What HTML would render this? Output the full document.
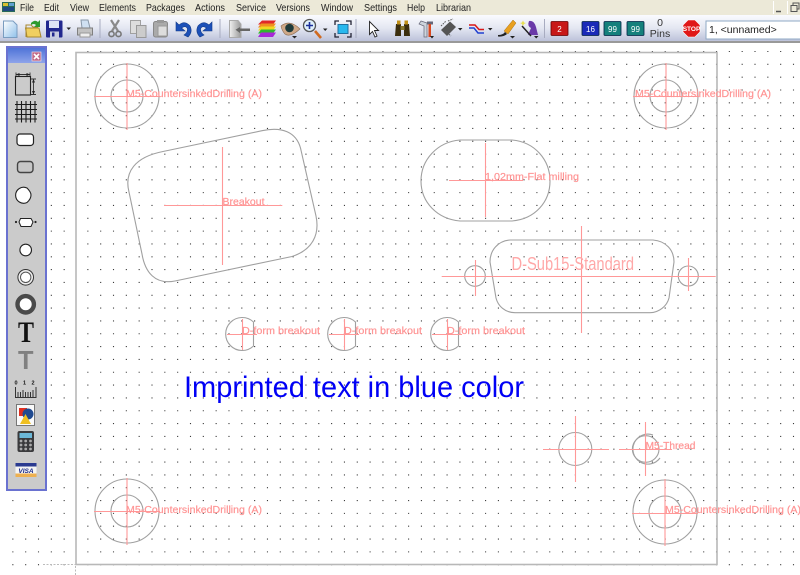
<!DOCTYPE html>
<html><head><meta charset="utf-8"><style>
html,body{margin:0;padding:0;background:#fff}
body{width:800px;height:575px;overflow:hidden;position:relative;font-family:"Liberation Sans",sans-serif}
svg{position:absolute;left:0;top:0;display:block}
</style></head><body>
<svg width="800" height="575" viewBox="0 0 800 575" xmlns="http://www.w3.org/2000/svg" font-family="'Liberation Sans',sans-serif">
<defs>
<path id="r" d="M12.3 0H75M87.3 0H800" stroke="#3a3a3a" stroke-width="1.1" stroke-dasharray="1.1 11.73" fill="none"/>
<linearGradient id="tb" x1="0" y1="0" x2="0" y2="1"><stop offset="0" stop-color="#fafbff"/><stop offset=".5" stop-color="#e4e7f2"/><stop offset="1" stop-color="#bcc2da"/></linearGradient>
<linearGradient id="tt" x1="0" y1="0" x2="0" y2="1"><stop offset="0" stop-color="#4f74d8"/><stop offset="1" stop-color="#8ea4ea"/></linearGradient>
<linearGradient id="doc" x1="0" y1="0" x2="1" y2="1"><stop offset="0" stop-color="#fff"/><stop offset="1" stop-color="#8fc0ea"/></linearGradient>
<linearGradient id="gr" x1="0" y1="0" x2="1" y2="0"><stop offset="0" stop-color="#f0f0f0"/><stop offset="1" stop-color="#999"/></linearGradient>
</defs>

<!-- canvas -->
<rect x="0" y="43" width="800" height="532" fill="#fff"/>
<use href="#r" y="51.5"/><use href="#r" y="64.33"/><use href="#r" y="77.16"/><use href="#r" y="89.99"/><use href="#r" y="102.82"/><use href="#r" y="115.65"/><use href="#r" y="128.48"/><use href="#r" y="141.31"/><use href="#r" y="154.14"/><use href="#r" y="166.97"/><use href="#r" y="179.8"/><use href="#r" y="192.63"/><use href="#r" y="205.46"/><use href="#r" y="218.29"/><use href="#r" y="231.12"/><use href="#r" y="243.95"/><use href="#r" y="256.78"/><use href="#r" y="269.61"/><use href="#r" y="282.44"/><use href="#r" y="295.27"/><use href="#r" y="308.1"/><use href="#r" y="320.93"/><use href="#r" y="333.76"/><use href="#r" y="346.59"/><use href="#r" y="359.42"/><use href="#r" y="372.25"/><use href="#r" y="385.08"/><use href="#r" y="397.91"/><use href="#r" y="410.74"/><use href="#r" y="423.57"/><use href="#r" y="436.4"/><use href="#r" y="449.23"/><use href="#r" y="462.06"/><use href="#r" y="474.89"/><use href="#r" y="487.72"/><use href="#r" y="500.55"/><use href="#r" y="513.38"/><use href="#r" y="526.21"/><use href="#r" y="539.04"/><use href="#r" y="551.87"/><use href="#r" y="564.7"/>
<rect x="76" y="52.5" width="641" height="512" fill="none" stroke="#b8b8b8" stroke-width="1.6"/>
<path d="M43 564.5H76M75.5 566V575" stroke="#bbb" stroke-width="1" stroke-dasharray="2 1.5" fill="none"/>

<!-- drawing: outlines -->
<g fill="none" stroke="#a0a0a0" stroke-width="1.1">
<circle cx="127" cy="96" r="32"/><circle cx="127" cy="96" r="16"/>
<circle cx="666" cy="96" r="32"/><circle cx="666" cy="96" r="16"/>
<circle cx="127" cy="511" r="32"/><circle cx="127" cy="511" r="16"/>
<circle cx="665" cy="512" r="32"/><circle cx="665" cy="512" r="16"/>
<path d="M163 151.5L262 130.7C282 126.5 296 132 300.5 148L316 216C320 235 312 250 292 256.5L175 281C155 285 145 272 142 254L129 192C124 172 135 157 163 151.5Z"/>
<path d="M460 140H512C535 142 550 160 550 181C550 202 535 219 512 221H460C437 219 421 202 421 181C421 160 437 142 460 140Z"/>
<path d="M510 240H653C666 241 674 250 674 262L669 298C667 306 659 312.7 650 312.7H515C505 312.7 498 306 496 298L490 262C490 250 498 241 510 240Z"/>
<circle cx="475" cy="276" r="10.3"/><circle cx="688.3" cy="276" r="10"/>
<path d="M253.5 322A16.5 16.5 0 1 0 253.5 346Z"/>
<path d="M355.5 322A16.5 16.5 0 1 0 355.5 346Z"/>
<path d="M458.5 322A16.5 16.5 0 1 0 458.5 346Z"/>
<circle cx="575.3" cy="449" r="16.5"/>
<circle cx="645.7" cy="449" r="13.3"/>
<path d="M653 435A15 15 0 1 0 660 458"/>
</g>

<!-- drawing: red crosses -->
<g fill="none" stroke="#ff9898" stroke-width="1.1">
<path d="M94 96.5H160M127 63V130"/>
<path d="M633 96.5H699M666 63V130"/>
<path d="M94 511.5H160M127 478V545"/>
<path d="M632 513.5H698M665 479V546"/>
<path d="M164 205.5H282.3M222.5 147V265"/>
<path d="M449 180.5H523M485.5 143V217"/>
<path d="M441.7 276.5H715.7M581.5 226V333M475.5 260V296M688.5 258V291"/>
<path d="M227 334.5H257M242.5 319V350"/>
<path d="M329 334.5H359M344.5 319V350"/>
<path d="M432 334.5H462M447.5 319V350"/>
<path d="M543 449.5H609M575.5 416V482"/>
<path d="M619 449.5H672M645.5 422V476"/>
</g>
<g fill="#ff9494" stroke="#ff9494" stroke-width=".2" font-size="10.5">
<text x="126" y="97" textLength="136" lengthAdjust="spacingAndGlyphs">M5-CountersinkedDrilling (A)</text>
<text x="635" y="97" textLength="136" lengthAdjust="spacingAndGlyphs">M5-CountersinkedDrilling (A)</text>
<text x="126" y="513" textLength="136" lengthAdjust="spacingAndGlyphs">M5-CountersinkedDrilling (A)</text>
<text x="665" y="513" textLength="136" lengthAdjust="spacingAndGlyphs">M5-CountersinkedDrilling (A)</text>
<text x="222.5" y="205" textLength="42" lengthAdjust="spacingAndGlyphs">Breakout</text>
<text x="485" y="180" textLength="94" lengthAdjust="spacingAndGlyphs">1,02mm-Flat milling</text>
<text x="242" y="334" textLength="78" lengthAdjust="spacingAndGlyphs">D-form breakout</text>
<text x="344" y="334" textLength="78" lengthAdjust="spacingAndGlyphs">D-form breakout</text>
<text x="447" y="334" textLength="78" lengthAdjust="spacingAndGlyphs">D-form breakout</text>
<text x="645.5" y="449" textLength="50" lengthAdjust="spacingAndGlyphs">M5-Thread</text>
</g>
<text x="511.5" y="270" font-size="18" fill="#ffa8a8" textLength="122.5" lengthAdjust="spacingAndGlyphs">D-Sub15-Standard</text>
<text x="184" y="397" font-size="30" fill="#0000f5" textLength="340" lengthAdjust="spacingAndGlyphs">Imprinted text in blue color</text>

<!-- menu bar -->
<rect x="0" y="0" width="800" height="15" fill="#ece9d8"/>
<rect x="2" y="2" width="13" height="10" fill="#2a6a58"/><rect x="3" y="3" width="5" height="3" fill="#d8c030"/><rect x="9" y="3" width="5" height="3" fill="#60a0d0"/><rect x="3" y="7" width="11" height="4" fill="#204a80"/>
<g font-size="10.5" fill="#222">
<text x="20" y="11" textLength="14" lengthAdjust="spacingAndGlyphs">File</text>
<text x="44" y="11" textLength="15" lengthAdjust="spacingAndGlyphs">Edit</text>
<text x="70" y="11" textLength="19" lengthAdjust="spacingAndGlyphs">View</text>
<text x="99" y="11" textLength="37" lengthAdjust="spacingAndGlyphs">Elements</text>
<text x="146" y="11" textLength="39" lengthAdjust="spacingAndGlyphs">Packages</text>
<text x="195" y="11" textLength="30" lengthAdjust="spacingAndGlyphs">Actions</text>
<text x="236" y="11" textLength="30" lengthAdjust="spacingAndGlyphs">Service</text>
<text x="276" y="11" textLength="34" lengthAdjust="spacingAndGlyphs">Versions</text>
<text x="321" y="11" textLength="32" lengthAdjust="spacingAndGlyphs">Window</text>
<text x="364" y="11" textLength="33" lengthAdjust="spacingAndGlyphs">Settings</text>
<text x="407" y="11" textLength="18" lengthAdjust="spacingAndGlyphs">Help</text>
<text x="436" y="11" textLength="35" lengthAdjust="spacingAndGlyphs">Librarian</text>
</g>
<path d="M776 11.5h5" stroke="#555" stroke-width="1.5"/>
<rect x="773" y="1" width="1" height="13" fill="#fff"/><rect x="787" y="1" width="1" height="13" fill="#fff"/>
<rect x="793" y="3" width="6" height="6" fill="none" stroke="#555"/><rect x="791" y="5.5" width="6" height="6" fill="#ece9d8" stroke="#555"/>

<!-- toolbar -->
<rect x="0" y="15" width="800" height="26" fill="url(#tb)"/>
<rect x="0" y="41" width="800" height="2" fill="#999"/>
<g fill="#a8acc0"><rect x="99.5" y="19" width="1" height="19"/><rect x="219.5" y="19" width="1" height="19"/><rect x="355.5" y="19" width="1" height="19"/><rect x="544" y="19" width="1" height="19"/></g>
<!-- new -->
<path d="M3.5 21H13L17 25V37.5H3.5Z" fill="url(#doc)" stroke="#7a9cc0"/>
<!-- open -->
<path d="M25.5 28H39L41 37H27Z" fill="#f0cf60" stroke="#a88830"/><path d="M26 37V25H31L33 27H38" fill="none" stroke="#a88830"/>
<path d="M31 23Q35 19 38 22L40 20V27H34L36 25Q34 23 31 25Z" fill="#2c9a30"/>
<!-- save -->
<rect x="46" y="20.5" width="16.5" height="17" fill="#22288e" rx="1"/><rect x="49" y="21" width="10" height="7" fill="#dfe4f5"/><rect x="50" y="31.5" width="9" height="6" fill="#c8cce0"/><rect x="52" y="32.5" width="2.5" height="4" fill="#22288e"/>
<path d="M66.5 27.5H71L68.7 30Z" fill="#222"/>
<!-- print -->
<path d="M81 20H88L90 28H82Z" fill="#cfe0f2" stroke="#8898a8"/><path d="M77.5 28H92.5V35H77.5Z" fill="#c2c2c2" stroke="#808080"/><rect x="80" y="33" width="10" height="4" fill="#eee" stroke="#999"/>
<!-- cut -->
<path d="M111 20L118 31M119 20L112 31" stroke="#8a8a8a" stroke-width="2.2" fill="none"/><circle cx="111.5" cy="34" r="2.6" fill="none" stroke="#777" stroke-width="1.6"/><circle cx="118.5" cy="34" r="2.6" fill="none" stroke="#777" stroke-width="1.6"/>
<!-- copy -->
<rect x="130.5" y="20.5" width="10" height="13" fill="#ddd" stroke="#a0a0a0"/><rect x="136.5" y="25.5" width="9.5" height="12" fill="#ccc" stroke="#999"/>
<!-- paste -->
<rect x="153.5" y="21.5" width="14" height="15.5" rx="2" fill="#aaa" stroke="#888"/><rect x="157" y="20" width="7" height="3" fill="#999"/><rect x="158" y="26" width="9" height="10" fill="#ddd" stroke="#999"/>
<!-- undo -->
<path d="M176 22V31H185L181.5 28Q186 25 187.5 29Q187.5 33 184 35L188 37Q193 32 190 26Q185 20 179 25Z" fill="#1c50b8" stroke="#123a88" stroke-width=".6"/>
<!-- redo -->
<path d="M212 22V31H203L206.5 28Q202 25 200.5 29Q200.5 33 204 35L200 37Q195 32 198 26Q203 20 209 25Z" fill="#1c50b8" stroke="#123a88" stroke-width=".6"/>
<!-- import -->
<path d="M229.5 20.5H238L241 24V37.5H229.5Z" fill="url(#gr)" stroke="#aaa"/><path d="M240 28.5H250V31H240ZM240 27L235.5 29.7L240 33Z" fill="#666"/>
<!-- layers -->
<path d="M262 20.5H276L273 24.5H258Z" fill="#e02828"/><path d="M261 23.5H276L273 27.5H258Z" fill="#f09020"/><path d="M261 26.5H276L273 30.5H258Z" fill="#f0d820"/><path d="M261 29.5H276L273 33.5H258Z" fill="#30b830"/><path d="M261 32.5H276L273 37H258Z" fill="#a828d8"/>
<!-- eye -->
<path d="M281 26Q290 19 300 29Q290 38 285 34Q282 31 281 26Z" fill="#cfa888" stroke="#8a6a50" stroke-width=".6"/><circle cx="289.5" cy="28" r="4.3" fill="#1f3a3a"/><path d="M292 36H297L294.5 38.5Z" fill="#222"/>
<!-- zoom -->
<path d="M315 31L321 38" stroke="#d06a20" stroke-width="2.6"/><circle cx="309.5" cy="25.5" r="6" fill="#dff0fa" stroke="#555" stroke-width="1.3"/><path d="M306 25.5H313M309.5 22V29" stroke="#1b2f9a" stroke-width="1.6"/>
<path d="M323 28.5H327.5L325.2 31Z" fill="#222"/>
<!-- fit -->
<rect x="338" y="24.5" width="10" height="9" fill="#28b8ee" stroke="#2070a0"/><path d="M335 25V21H339M346 21H351V25M351 33V37H347M339 37H335V33" fill="none" stroke="#223" stroke-width="1.3"/>
<!-- cursor -->
<path d="M369.5 21.5V34.5L372.5 31.5L375 37L377 36L374.5 30.5H378.5Z" fill="#fff" stroke="#222" stroke-width=".9"/>
<!-- binoculars -->
<path d="M396 24H401V36H395ZM404 24H409L410 36H404Z" fill="#3b2e0e"/><rect x="397" y="20.5" width="3.5" height="4" fill="#c09018"/><rect x="404.5" y="20.5" width="3.5" height="4" fill="#c09018"/><rect x="400.5" y="26" width="4" height="4" fill="#8a7a30"/>
<!-- tools -->
<path d="M421 21L427 23V37H424V26L419 24Z" fill="#cdd4dc" stroke="#667" stroke-width=".7"/><rect x="427" y="21.5" width="6" height="3" fill="#667"/><rect x="428.5" y="24" width="2.5" height="13" fill="#d84820"/><path d="M430 36H434L432 38.5Z" fill="#222"/>
<!-- chip -->
<path d="M441 30L450 21.5L456 27L447 36Z" fill="#555"/><path d="M441 26L446 21M445 31L451 36M448 21L453 19" stroke="#555" stroke-width="1" fill="none" stroke-dasharray="1.5 1"/><path d="M458 28H462.5L460.2 30.5Z" fill="#222"/>
<!-- route -->
<path d="M469 25H475L479 29.5H484" fill="none" stroke="#d81818" stroke-width="1.5"/><path d="M469 28H474L478 33H484" fill="none" stroke="#2040d0" stroke-width="1.5"/><path d="M488 28H492.5L490.2 30.5Z" fill="#222"/>
<!-- pen -->
<path d="M504 31L513 20L516 23L508 34Z" fill="#e8a020" stroke="#a87010" stroke-width=".5"/><path d="M498 35Q503 35 505 32L507 34Q504 37 498 36.5Z" fill="#222"/><path d="M510 36H515L512.5 38.5Z" fill="#222"/>
<!-- wizard -->
<path d="M529 21Q534 20 536 27L538 35H528L531 28Q527 26 529 21Z" fill="#6a3aa8"/><path d="M522 26L531 36" stroke="#222" stroke-width="1.5"/><path d="M523 20.5L524 22.5L526 23L524 24L523 26L522 24L520 23L522 22.5Z" fill="#e8e050"/><path d="M534 36H538.5L536.2 38.5Z" fill="#222"/>
<!-- chips -->
<g font-size="8" text-anchor="middle" fill="#fff">
<rect x="551" y="21.5" width="17" height="14" rx="1" fill="#c81818" stroke="#600" stroke-width=".8"/><text x="559.5" y="32">2</text>
<rect x="582" y="21.5" width="17" height="14" rx="1" fill="#1a2ab8" stroke="#024" stroke-width=".8"/><text x="590.5" y="32">16</text>
<rect x="604" y="21.5" width="17" height="14" rx="1" fill="#14807c" stroke="#024" stroke-width=".8"/><text x="612.5" y="32">99</text>
<rect x="627" y="21.5" width="17" height="14" rx="1" fill="#14807c" stroke="#024" stroke-width=".8"/><text x="635.5" y="32">99</text>
</g>
<g font-size="10.5" text-anchor="middle" fill="#333"><text x="660" y="26">0</text><text x="660" y="37">Pins</text></g>
<!-- stop -->
<path d="M688 20H695L700 25V32L695 37H688L683 32V25Z" fill="#e01818" stroke="#fff" stroke-width=".6"/><text x="691.5" y="31" font-size="6.5" font-weight="bold" fill="#fff" text-anchor="middle">STOP</text>
<!-- combo -->
<rect x="706" y="21" width="95" height="18" fill="#fff" stroke="#8fa9c4"/>
<text x="709" y="33" font-size="10.5" fill="#222">1, &lt;unnamed&gt;</text>

<!-- floating palette -->
<rect x="7" y="47" width="39" height="443" fill="#cbcbcb" stroke="#6a72d0" stroke-width="2"/>
<rect x="8" y="48" width="37" height="15" fill="url(#tt)"/>
<rect x="32" y="52" width="9" height="9" fill="#c26a88" stroke="#e8d8e0" stroke-width=".7"/><path d="M34 54L39 59M39 54L34 59" stroke="#fff" stroke-width="1.6"/>
<!-- 1 dimension -->
<rect x="15.5" y="76.5" width="15" height="18.5" fill="none" stroke="#222" stroke-width="1.1"/>
<path d="M16 74.5H30M16 72.5V76M30 72.5V76M33.5 79V94M31 79H36M31 94.5H36" stroke="#333" stroke-width=".9" fill="none"/>
<path d="M16 74.5L19.5 73V76ZM30 74.5L26.5 73V76ZM33.5 79L32 82.5H35ZM33.5 94.5L32 91H35Z" fill="#222"/>
<!-- 2 grid -->
<path d="M17 101V122.5M21.5 101V122.5M26 101V122.5M30.5 101V122.5M35 101V122.5M15 104.5H37M15 109.5H37M15 114.5H37M15 119H37" stroke="#1a1a1a" stroke-width="1.1" fill="none"/>
<!-- 3,4 rects -->
<rect x="17" y="134" width="16.5" height="11.5" rx="3" fill="#fff" stroke="#222" stroke-width="1.2"/>
<rect x="17.5" y="161.5" width="15.5" height="11" rx="3" fill="#c6c6c6" stroke="#444" stroke-width="1.4"/>
<!-- 5 -->
<path d="M27 188Q31 192 31 195Q31 199 27 202.5A8 8 0 1 1 27 188Z" fill="#fff" stroke="#222" stroke-width="1.1"/>
<!-- 6 dsub -->
<path d="M20.5 218.5H31L33 222L31 226.5H21L19 222Z" fill="#fff" stroke="#222"/><circle cx="16" cy="222" r="1.1" fill="#222"/><circle cx="35.5" cy="222" r="1.1" fill="#222"/>
<!-- 7 -->
<circle cx="25.7" cy="250" r="5.8" fill="#fff" stroke="#222" stroke-width="1.1"/>
<!-- 8 -->
<circle cx="25.7" cy="277.3" r="7.8" fill="#eee" stroke="#333" stroke-width="1"/><circle cx="25.7" cy="277.3" r="5.2" fill="#fff" stroke="#555"/>
<!-- 9 -->
<circle cx="25.7" cy="304.3" r="8.2" fill="#fff" stroke="#4a4a4a" stroke-width="4.4"/>
<!-- 10,11 T -->
<text x="18" y="342" font-family="'Liberation Serif',serif" font-weight="bold" font-size="30" fill="#111" textLength="16" lengthAdjust="spacingAndGlyphs">T</text>
<text x="18" y="369" font-weight="bold" font-size="26" fill="#808080" textLength="15.5" lengthAdjust="spacingAndGlyphs">T</text>
<!-- 12 ruler -->
<g font-size="5.5" font-weight="bold" text-anchor="middle" fill="#111"><text x="16" y="384.5">0</text><text x="24.5" y="384.5">1</text><text x="33" y="384.5">2</text></g>
<path d="M15.5 387V397.5H36V387M18 392V397M20.5 392V397M23 390V397M25.5 392V397M28 392V397M30.5 392V397M33 390V397" fill="none" stroke="#333"/>
<!-- 13 image -->
<rect x="16.5" y="404.5" width="18" height="21" fill="#fafafa" stroke="#777"/><rect x="19" y="408" width="8" height="8" fill="#e03020"/><circle cx="28" cy="414" r="5.5" fill="#204a90"/><path d="M20 424L25.5 414L31 424Z" fill="#f0c020"/>
<!-- 14 calc -->
<rect x="17.5" y="431" width="16.5" height="21" rx="2" fill="#3a3a3c"/><rect x="19.5" y="433" width="12.5" height="5" fill="#6cb8d8"/>
<g fill="#aaa"><circle cx="21" cy="441" r="1.4"/><circle cx="25.7" cy="441" r="1.4"/><circle cx="30.5" cy="441" r="1.4"/><circle cx="21" cy="445" r="1.4"/><circle cx="25.7" cy="445" r="1.4"/><circle cx="30.5" cy="445" r="1.4"/><circle cx="21" cy="449" r="1.4"/><circle cx="25.7" cy="449" r="1.4"/><circle cx="30.5" cy="449" r="1.4"/></g>
<!-- 15 visa -->
<rect x="15.5" y="463" width="21" height="14" fill="#f4f4f4"/><rect x="15.5" y="463" width="21" height="3.5" fill="#2a3a90"/><rect x="15.5" y="473.5" width="21" height="3.5" fill="#eeb050"/>
<text x="26" y="473" font-size="6.5" font-weight="bold" font-style="italic" text-anchor="middle" fill="#1a2a88">VISA</text>
</svg>
</body></html>
